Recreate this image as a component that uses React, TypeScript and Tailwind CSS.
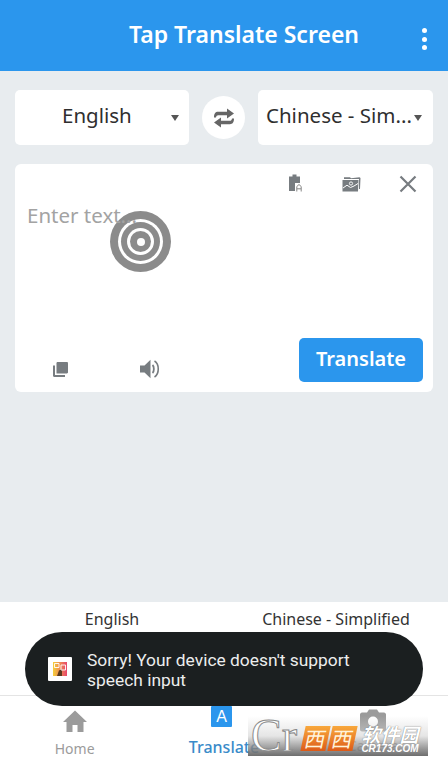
import React from "react";

const F = { fontFamily: '"Noto Sans", sans-serif' };

function Caret() {
  return <div className="w-0 h-0 border-l-[4.5px] border-r-[4.5px] border-t-[6px] border-l-transparent border-r-transparent border-t-[#555]" />;
}

function Swap() {
  return (
    <svg width="22" height="22" viewBox="0 0 22 22" fill="#666">
      <path d="M14 1.5 21 6.5 14 11.5V8.2H5.2C4 8.2 3.2 9 3 10.5H1C1 6.5 2.5 4.8 5 4.8H14Z" />
      <path d="M8 20.5 1 15.5 8 10.5V13.8H16.8C18 13.8 18.8 13 19 11.5H21C21 15.5 19.5 17.2 17 17.2H8Z" />
    </svg>
  );
}

function ClipLock() {
  return (
    <svg width="14" height="19" viewBox="0 0 14 19">
      <path d="M0 2.5H3.5V0.5H7.5V2.5H11V17H0Z" fill="#777c80" />
      <rect x="6" y="9" width="8" height="10" fill="#fff" />
      <path d="M7.8 17.5V12.5L10 10.5 12.2 12.5V17.5M7.8 14.8H12.2" fill="none" stroke="#888" strokeWidth="1" />
    </svg>
  );
}

function Photos() {
  return (
    <svg width="19" height="16" viewBox="0 0 19 16">
      <path d="M2 3V1.2H8L9 2.2 17.5 1.2 18.5 2 18 13H17V3Z" fill="#777c80" />
      <path d="M0.5 4H16.5L16 15.5H0.5Z" fill="#777c80" />
      <circle cx="9" cy="7.5" r="1.6" fill="none" stroke="#fff" strokeWidth="0.9" />
      <path d="M1 12 5 9.2 8.5 11.5 12 10 16 7.5" fill="none" stroke="#fff" strokeWidth="1" />
    </svg>
  );
}

function Copy() {
  return (
    <svg width="15" height="15" viewBox="0 0 15 15" fill="#777c80">
      <path d="M3.5 1.2C3.5 .5 4 0 4.7 0H13.8C14.5 0 15 .5 15 1.2V10.3C15 11 14.5 11.5 13.8 11.5H3.5Z" />
      <path d="M0 3.5H2V13H12V15H1.2C.5 15 0 14.5 0 13.8Z" />
    </svg>
  );
}

function Speaker() {
  return (
    <svg width="21" height="20" viewBox="0 0 21 20" fill="none">
      <path d="M0 6.5H4.5L10.5 .8V19.2L4.5 13.5H0Z" fill="#777c80" />
      <path d="M12.5 6C14.3 7.5 14.3 12.5 12.5 14" stroke="#777c80" strokeWidth="1.8" />
      <path d="M14.5 2C19.5 5 19.5 15 14.5 18" stroke="#777c80" strokeWidth="1.6" />
    </svg>
  );
}

function Home() {
  return (
    <svg width="24" height="23" viewBox="0 0 24 22" fill="#9b9b9b">
      <path d="M12 0 24 11.5H20.5V21.5H14.5V14.5H9.5V21.5H3.5V11.5H0Z" />
    </svg>
  );
}

function Camera() {
  return (
    <svg width="26" height="25" viewBox="0 0 26 22" fill="#9b9b9b">
      <path d="M2 3H7L9 0H17L19 3H24C25 3 26 4 26 5V20C26 21 25 22 24 22H2C1 22 0 21 0 20V5C0 4 1 3 2 3Z" />
      <circle cx="13" cy="12" r="5" fill="#fff" />
    </svg>
  );
}

function AppGlyph() {
  return (
    <div className="w-[24px] h-[24px] bg-white rounded-[1px] flex items-center justify-center">
      <svg width="14" height="14" viewBox="0 0 14 14">
        <defs>
          <linearGradient id="ag" x1="0" x2="1" y1="0" y2="0">
            <stop offset="0" stopColor="#f5cf3a" />
            <stop offset="1" stopColor="#e8456b" />
          </linearGradient>
        </defs>
        <rect width="14" height="14" fill="url(#ag)" />
        <path d="M6 8.5 9 7V14H4Z" fill="#5b3a1e" />
        <path d="M1.5 1.5H6V5.5H1.5ZM8 3H12.5V8H8Z" fill="none" stroke="#fff" strokeWidth="0.9" />
      </svg>
    </div>
  );
}

function TouchRing() {
  return (
    <div className="absolute left-[110px] top-[211px] w-[61px] h-[61px] rounded-full bg-[#8b8b8b] blur-[0.6px] flex items-center justify-center">
      <div className="w-[45px] h-[45px] rounded-full bg-white flex items-center justify-center">
        <div className="w-[39px] h-[39px] rounded-full bg-[#8b8b8b] flex items-center justify-center">
          <div className="w-[27px] h-[27px] rounded-full bg-white flex items-center justify-center">
            <div className="w-[21px] h-[21px] rounded-full bg-[#8b8b8b] flex items-center justify-center">
              <div className="w-[8px] h-[8px] rounded-full bg-white" />
            </div>
          </div>
        </div>
      </div>
    </div>
  );
}

const cjk = { fontFamily: '"Noto Sans CJK SC", sans-serif' };

function Watermark() {
  return (
    <div className="absolute left-[248px] top-[716px] w-[180px] h-[40px] flex items-center bg-gradient-to-b from-[#ffffff00] via-[#d4d4d499] to-[#666666f2]">
      <span className="ml-[3px] text-[46px] leading-[38px] text-white [-webkit-text-stroke:1px_#8a8a8a] w-[52px] shrink-0" style={{ fontFamily: '"Liberation Serif", serif' }}>Cr</span>
      <div className="flex gap-[2px] shrink-0 -skew-x-12 mt-[5px]">
        <span className="w-[25px] h-[25px] bg-gradient-to-b from-[#f8a83c] to-[#dc5a18] text-[#fff3dc] text-[21px] leading-[24px] text-center" style={cjk}>西</span>
        <span className="w-[25px] h-[25px] bg-gradient-to-b from-[#f8a83c] to-[#dc5a18] text-[#fff3dc] text-[21px] leading-[24px] text-center" style={cjk}>西</span>
      </div>
      <div className="ml-[5px] flex flex-col items-center shrink-0 text-white w-[60px] mt-[4px]">
        <span className="text-[19px] leading-[21px] font-bold italic [text-shadow:0_0_1px_#555]" style={cjk}>软件园</span>
        <span className="text-[10px] leading-[10px] italic font-bold" style={{ fontFamily: '"Liberation Sans", sans-serif' }}>CR173.COM</span>
      </div>
    </div>
  );
}

export default function App() {
  return (
    <div className="relative w-[448px] h-[766px] flex flex-col overflow-hidden bg-[#e8ecef]" style={F}>
      <header className="h-[71px] shrink-0 bg-[#2b96ed] flex items-center relative">
        <div className="w-full text-center pl-[40px] text-white text-[23px] font-semibold leading-[30px] pb-[4px]">Tap Translate Screen</div>
        <div className="absolute right-[21px] top-[28px] flex flex-col gap-[3.5px]">
          <span className="w-[5px] h-[5px] rounded-full bg-white" />
          <span className="w-[5px] h-[5px] rounded-full bg-white" />
          <span className="w-[5px] h-[5px] rounded-full bg-white" />
        </div>
      </header>

      <main className="flex-1 px-[15px] pt-[19px]">
        <div className="flex items-center justify-between h-[55px]">
          <div className="w-[174px] h-[55px] bg-white rounded-[5px] flex items-center pl-[47px] pr-[10px] justify-between">
            <span className="text-[20.5px] text-[#2f2f2f] leading-[28px] pb-[5px]">English</span>
            <Caret />
          </div>
          <div className="w-[43px] h-[43px] rounded-full bg-white flex items-center justify-center">
            <Swap />
          </div>
          <div className="w-[175px] h-[55px] bg-white rounded-[5px] flex items-center pl-[8px] pr-[11px] justify-between">
            <span className="text-[20.5px] text-[#2f2f2f] leading-[28px] pb-[5px] whitespace-nowrap">Chinese - Sim...</span>
            <Caret />
          </div>
        </div>

        <section className="mt-[19px] h-[228px] bg-white rounded-[6px] flex flex-col">
          <div className="h-[38px] flex items-center justify-end pt-[1px]">
            <div className="mr-[39px]"><ClipLock /></div>
            <div className="mr-[38px]"><Photos /></div>
            <svg className="mr-[16px]" width="18" height="18" viewBox="0 0 18 18" stroke="#777c80" strokeWidth="2.2">
              <path d="M1.5 1.5 16.5 16.5M16.5 1.5 1.5 16.5" />
            </svg>
          </div>
          <div className="relative z-10 flex-1 pl-[12px] text-[20.5px] leading-[26px] text-[#a3a3a3]">Enter text...</div>
          <div className="flex items-end justify-between pr-[10px] pb-[10px]">
            <div className="flex items-center pb-[3px]">
              <div className="ml-[38px]"><Copy /></div>
              <div className="ml-[72px]"><Speaker /></div>
            </div>
            <div className="w-[124px] h-[44px] bg-[#2b96ed] rounded-[5px] flex items-center justify-center text-white text-[20px] font-semibold leading-[26px] pb-[3px]">Translate</div>
          </div>
        </section>
      </main>

      <footer className="h-[164px] shrink-0 bg-white flex flex-col">
        <div className="h-[94px] grid grid-cols-2 pt-[5px] border-b border-[#e4e4e4]">
          <div className="flex flex-col items-center">
            <span className="text-[16px] leading-[24px] text-[#333]">English</span>
            <span className="mt-[1px] w-[12px] h-[3px] bg-[#2b6fa8]" />
          </div>
          <div className="flex flex-col items-center">
            <span className="text-[16px] leading-[24px] text-[#333]">Chinese - Simplified</span>
            <span className="mt-[1px] w-[12px] h-[3px] bg-[#2b6fa8]" />
          </div>
        </div>
        <nav className="flex-1 grid grid-cols-3 items-start">
          <div className="flex flex-col items-center pt-[14px]">
            <Home />
            <span className="mt-[6px] text-[14px] leading-[20px] text-[#9b9b9b]">Home</span>
          </div>
          <div className="flex flex-col items-center pt-[10px]">
            <div className="mr-[5px] w-[21px] h-[21px] bg-[#2b96ed] rounded-[1px] flex items-center justify-center text-white text-[16px] leading-[16px]" style={{ fontFamily: '"Liberation Sans", sans-serif' }}>A</div>
            <span className="mt-[9px] text-[16px] leading-[22px] text-[#3a8bc9] font-medium">Translate</span>
          </div>
          <div className="flex flex-col items-center pt-[12px]">
            <Camera />
            <span className="mt-[3px] text-[14px] leading-[20px] text-[#9b9b9b]">Camera</span>
          </div>
        </nav>
      </footer>

      <TouchRing />
      <Watermark />

      <div className="absolute left-[25px] top-[632px] w-[398px] h-[74px] rounded-[37px] bg-[#1b1f20] flex items-center pl-[23px] pr-[20px]">
        <AppGlyph />
        <div className="ml-[15px] pt-[2px] text-[17.4px] leading-[20px] text-[#eceded]" style={{ fontFamily: 'Roboto, sans-serif' }}>
          Sorry! Your device doesn't support<br />speech input
        </div>
      </div>
    </div>
  );
}
